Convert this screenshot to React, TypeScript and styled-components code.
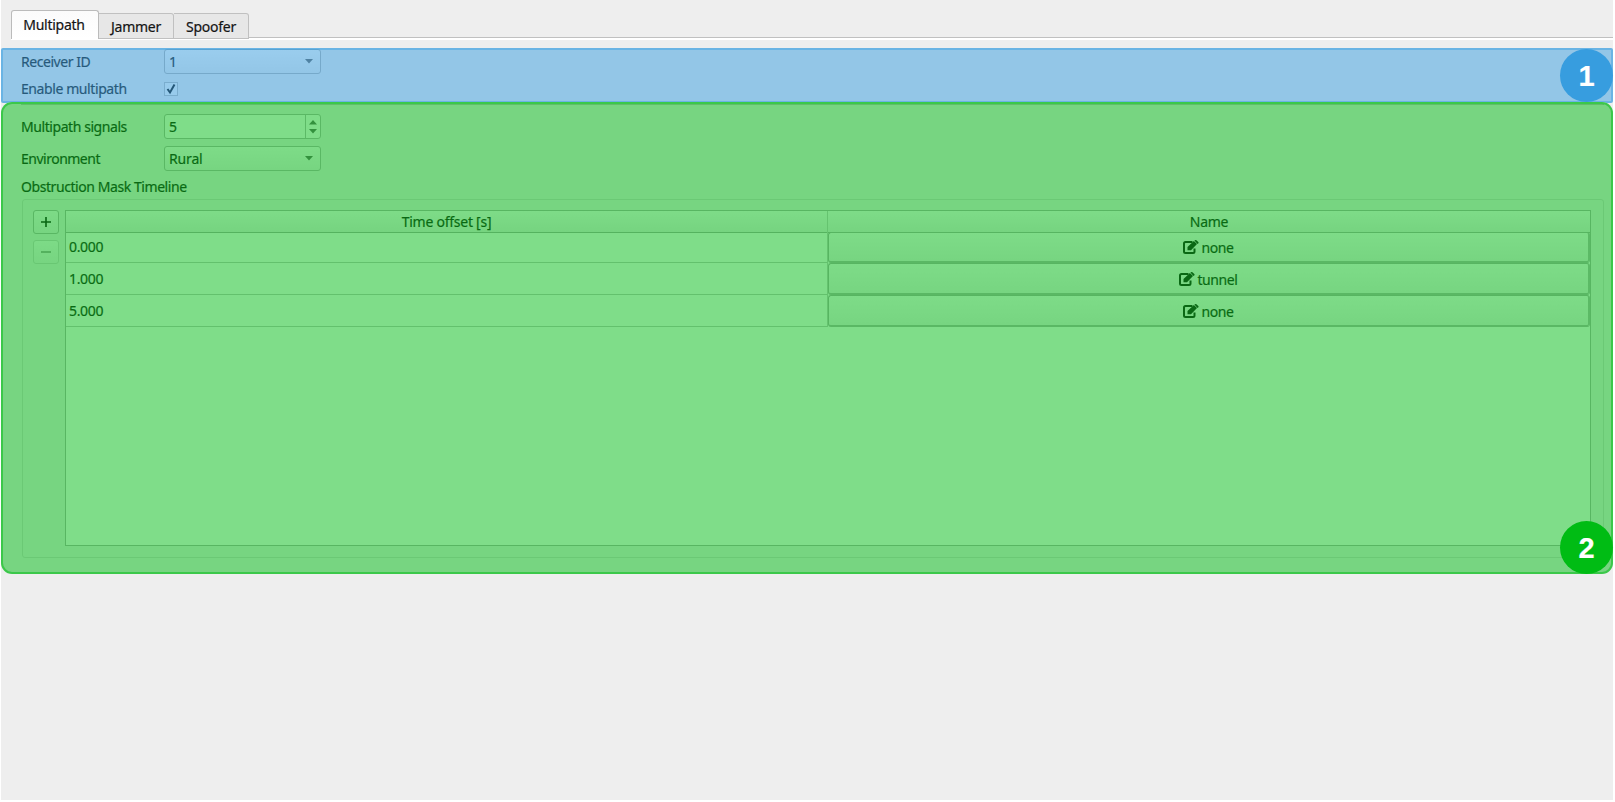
import React from "react"
import styled, { createGlobalStyle, css } from "styled-components"

const GlobalStyle = createGlobalStyle`
  * {
    box-sizing: border-box;
  }

  body {
    margin: 0;
    background: #fff;
    color: #141414;
    font-family: "Noto Sans", "Open Sans", sans-serif;
    font-size: 14px;
    line-height: 20px;
    -webkit-text-stroke: 0.2px;
    overflow: hidden;
  }
`

const Window = styled.main`
  display: flex;
  flex-direction: column;
  height: 800px;
  margin: 0 2px 2px 1px;
  background: #eee;
`

const Tabs = styled.nav`
  display: flex;
  align-items: flex-end;
  height: 40px;
  padding-left: 10px;
  flex-shrink: 0;
  margin-bottom: 8px;

  &::after {
    content: "";
    flex: 1;
    height: 2px;
    border-top: 1px solid #c0c0c0;
    background: #fff;
  }
`

const Tab = styled.button<{ $width: number; $active?: boolean }>`
  width: ${props => props.$width}px;
  height: 26px;
  padding: 2px 0 0;
  border: 1px solid #c0c0c0;
  border-left: 0;
  border-radius: 0 3px 0 0;
  background: #e7e7e7;
  box-shadow: 0 1px #fff;
  margin-bottom: 1px;
  font: inherit;
  color: inherit;
  letter-spacing: -0.25px;

  ${props =>
    props.$active &&
    css`
      height: 29px;
      padding: 0 2px 0 0;
      border: 1px solid #bbb;
      border-bottom: 0;
      border-radius: 3px 3px 0 0;
      background: linear-gradient(#fbfbfb, #fff);
    `}
`

const Region = styled.section<{ $tint: string; $edge: string; $radius: number }>`
  position: relative;

  &::after {
    content: "";
    position: absolute;
    inset: 0;
    border: 2px solid ${props => props.$edge};
    border-radius: ${props => props.$radius}px;
    background: ${props => props.$tint};
    pointer-events: none;
  }
`

const ReceiverRegion = styled(Region)`
  height: 55px;
  flex-shrink: 0;
  padding: 1px 0 0 20px;
`

const MultipathRegion = styled(Region)`
  height: 472px;
  flex-shrink: 0;
  margin-top: -1px;
  padding: 2px 9px 16px 20px;
  background: #eee;
  border-radius: 11px;
`

const Separator = styled.div`
  height: 1px;
  margin-bottom: 9px;
  background: #c0c0c0;
`

const Field = styled.div<{ $height: number; $gap?: number }>`
  display: grid;
  grid-template-columns: 143px 157px;
  align-items: center;
  height: ${props => props.$height}px;
  margin-bottom: ${props => props.$gap || 0}px;
`

const Label = styled.label<{ $spacing: number }>`
  padding-top: 1px;
  letter-spacing: ${props => props.$spacing}px;
`

const Control = styled.div<{ $flat?: boolean }>`
  display: flex;
  align-items: center;
  height: 25px;
  padding-left: 4px;
  border: 1px solid #b4b4b4;
  border-radius: 3px;
  background: ${props => (props.$flat ? "#fff" : "linear-gradient(#fcfcfc, #eee)")};
`

const Value = styled.span`
  flex: 1;
  padding-top: 1px;
  letter-spacing: -0.15px;
`

const Arrow = styled.svg`
  display: block;
  width: 8px;
  height: 5px;
  fill: #666;
`

const SelectArrow = styled(Arrow)`
  margin-right: 7px;
`

const Stepper = styled.div`
  display: flex;
  flex-direction: column;
  justify-content: center;
  align-items: center;
  gap: 4px;
  width: 15px;
  height: 100%;
  border-left: 1px solid #b8b8b8;
`

const Checkbox = styled.div`
  display: flex;
  align-items: center;
  justify-content: center;
  width: 14px;
  height: 14px;
  border: 1px solid #bdbdbd;
  background: #f8f8f8;

  svg {
    width: 12px;
    height: 12px;
  }
`

const GroupTitle = styled.h2`
  height: 20px;
  margin: 1px 0 2px;
  font-size: 14px;
  font-weight: 400;
  letter-spacing: -0.43px;
`

const Group = styled.div`
  display: flex;
  gap: 6px;
  height: 359px;
  margin-left: 1px;
  padding: 10px 12px 11px 10px;
  border: 1px solid #d7d7d7;
  border-radius: 3px;
`

const Tools = styled.div`
  display: flex;
  flex-direction: column;
  gap: 6px;
`

const Tool = styled.button<{ $disabled?: boolean }>`
  display: flex;
  align-items: center;
  justify-content: center;
  width: 26px;
  height: 24px;
  padding: 0;
  border: 1px solid ${props => (props.$disabled ? "#d3d3d3" : "#b2b2b2")};
  border-radius: 3px;
  background: linear-gradient(#fafafa, #eee);
  color: ${props => (props.$disabled ? "#888" : "#111")};

  svg {
    width: 10px;
    height: 10px;
  }
`

const Table = styled.div`
  flex: 1;
  border: 1px solid #b0b0b0;
  background: #fff;
`

const Row = styled.div<{ $height: number }>`
  display: grid;
  grid-template-columns: 762px 1fr;
  height: ${props => props.$height}px;
`

const HeaderCell = styled.div`
  display: flex;
  align-items: center;
  justify-content: center;
  padding-top: 1px;
  border-bottom: 1px solid #aaa;
  background: linear-gradient(#fcfcfc, #ececec);
  letter-spacing: -0.25px;

  &:first-child {
    border-right: 1px solid #cacaca;
  }
`

const Cell = styled.div`
  display: flex;
  align-items: center;
  padding: 0 0 0 3px;
  border-right: 1px solid #cacaca;
  border-bottom: 1px solid #c6c6c6;
  letter-spacing: -0.35px;
`

const MaskButton = styled.button`
  display: flex;
  align-items: center;
  justify-content: center;
  gap: 2px;
  padding: 2px 0 0;
  border: 1px solid #aeaeae;
  border-right: 2px solid #b8b8b8;
  border-bottom: 2px solid #b4b4b4;
  border-radius: 3px;
  background: linear-gradient(#fcfcfc, #eee);
  color: inherit;
  font: inherit;
  letter-spacing: -0.4px;
`

const EditIcon = styled.svg`
  width: 16px;
  height: 14px;
  margin-bottom: 2px;
`

const Badge = styled.div<{ $color: string; $top: number }>`
  position: absolute;
  z-index: 1;
  top: ${props => props.$top}px;
  right: 0;
  display: flex;
  align-items: center;
  justify-content: center;
  width: 53px;
  height: 53px;
  padding-top: 1px;
  border-radius: 50%;
  background: ${props => props.$color};
  color: #fff;
  font: bold 29px "Liberation Sans", sans-serif;
`

const masks = [
  { offset: "0.000", name: "none", height: 31 },
  { offset: "1.000", name: "tunnel", height: 32 },
  { offset: "5.000", name: "none", height: 32 },
]

const Down = () => <path d="M0 0H8L4 4.5Z" />

const Edit = () => (
  <EditIcon viewBox="0 0 16 14">
    <path
      d="M9.5 2H2.5Q1 2 1 3.5V11.5Q1 13 2.5 13H10Q11.5 13 11.5 11.5V8.5"
      fill="none"
      stroke="currentColor"
      strokeWidth="2"
    />
    <path
      d="M4.5 10.3V7L10.9 1L14 4.1L8 10.3ZM11.4 .6L12 .2Q12.7-.2 13.4.3L15.3 2.1Q15.9 2.7 15.2 3.4L14.5 4Z"
      fill="currentColor"
    />
  </EditIcon>
)

const App = () => (
  <>
    <GlobalStyle />
    <Window>
      <Tabs>
        <Tab $width={88} $active>
          Multipath
        </Tab>
        <Tab $width={75}>Jammer</Tab>
        <Tab $width={75}>Spoofer</Tab>
      </Tabs>
      <ReceiverRegion $tint="rgba(55, 157, 223, 0.5)" $edge="rgba(55, 157, 223, 0.45)" $radius={2}>
        <Field $height={25} $gap={4}>
          <Label $spacing={-0.45}>Receiver ID</Label>
          <Control>
            <Value>1</Value>
            <SelectArrow viewBox="0 0 8 5">
              <Down />
            </SelectArrow>
          </Control>
        </Field>
        <Field $height={21}>
          <Label $spacing={-0.41}>Enable multipath</Label>
          <Checkbox>
            <svg viewBox="0 0 12 12" fill="none" stroke="#111" strokeWidth="2">
              <path d="M2.5 6L5 9.5L9.5 1.5" />
            </svg>
          </Checkbox>
        </Field>
        <Badge $color="#379ddf" $top={1}>
          1
        </Badge>
      </ReceiverRegion>
      <MultipathRegion $tint="rgba(0, 188, 20, 0.5)" $edge="rgba(0, 188, 20, 0.5)" $radius={11}>
        <Separator />
        <Field $height={25} $gap={7}>
          <Label $spacing={-0.43}>Multipath signals</Label>
          <Control $flat>
            <Value>5</Value>
            <Stepper>
              <Arrow viewBox="0 0 8 5">
                <path d="M0 4.5H8L4 0Z" />
              </Arrow>
              <Arrow viewBox="0 0 8 5">
                <Down />
              </Arrow>
            </Stepper>
          </Control>
        </Field>
        <Field $height={25} $gap={6}>
          <Label $spacing={-0.5}>Environment</Label>
          <Control>
            <Value>Rural</Value>
            <SelectArrow viewBox="0 0 8 5">
              <Down />
            </SelectArrow>
          </Control>
        </Field>
        <GroupTitle>Obstruction Mask Timeline</GroupTitle>
        <Group>
          <Tools>
            <Tool>
              <svg viewBox="0 0 10 10" stroke="currentColor" strokeWidth="1.6">
                <path d="M0 5H10M5 0V10" />
              </svg>
            </Tool>
            <Tool $disabled>
              <svg viewBox="0 0 10 10" stroke="currentColor" strokeWidth="1.4">
                <path d="M0 5H10" />
              </svg>
            </Tool>
          </Tools>
          <Table>
            <Row $height={21}>
              <HeaderCell>Time offset [s]</HeaderCell>
              <HeaderCell>Name</HeaderCell>
            </Row>
            {masks.map(mask => (
              <Row key={mask.offset} $height={mask.height}>
                <Cell>{mask.offset}</Cell>
                <MaskButton>
                  <Edit />
                  {mask.name}
                </MaskButton>
              </Row>
            ))}
          </Table>
        </Group>
        <Badge $color="#00bc14" $top={419}>
          2
        </Badge>
      </MultipathRegion>
    </Window>
  </>
)

export default App
